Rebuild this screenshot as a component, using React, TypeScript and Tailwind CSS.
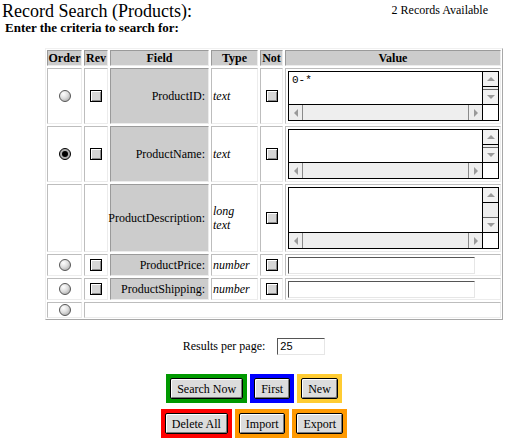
import React from "react";

const cellBase =
  "border border-t-[#bdbdbd] border-l-[#bdbdbd] border-r-[#ececec] border-b-[#ececec]";
const headBase =
  "flex items-center justify-center border border-t-[#9a9a9a] border-l-[#9a9a9a] border-r-[#ececec] border-b-[#ececec] bg-[#cccccc] text-[12px] font-bold leading-none overflow-hidden whitespace-nowrap";

function Radio({ checked = false }: { checked?: boolean }) {
  if (checked) {
    return (
      <span className="flex h-[12px] w-[12px] items-center justify-center rounded-full border border-black bg-[#b0b0b0]">
        <span className="block h-[6px] w-[6px] rounded-full bg-black" />
      </span>
    );
  }
  return (
    <span className="block h-[12px] w-[12px] rounded-full border border-[#555555] bg-[radial-gradient(circle_at_35%_30%,#ffffff_0%,#dedede_45%,#9a9a9a_100%)]" />
  );
}

function Check() {
  return (
    <span className="block h-[12px] w-[12px] border border-black bg-[#d6d6d6] shadow-[inset_1px_1px_0_#ffffff,inset_-1px_-1px_0_#8a8a8a]" />
  );
}

function Arrow({ dir }: { dir: "up" | "down" | "left" | "right" }) {
  const pts = {
    up: "0,4 4,0 8,4",
    down: "0,0 8,0 4,4",
    left: "4,0 4,8 0,4",
    right: "0,0 0,8 4,4",
  }[dir];
  const vertical = dir === "up" || dir === "down";
  return (
    <svg width={vertical ? 8 : 4} height={vertical ? 4 : 8} viewBox={vertical ? "0 0 8 4" : "0 0 4 8"}>
      <polygon points={pts} fill="#9a9a9a" />
    </svg>
  );
}

function TextBox({ className, text = "" }: { className: string; text?: string }) {
  return (
    <div className={`grid w-[211px] grid-cols-[1fr_16px] grid-rows-[1fr_16px] border border-black bg-white ${className}`}>
      <div className="px-[3px] pt-[2px] font-['Liberation_Mono',monospace] text-[11px] leading-[12px]">{text}</div>
      <div className="flex flex-col border-l border-black bg-[#eeeeee]">
        <div className="flex h-[15px] items-center justify-center border-b border-black bg-[#f2f2f2]">
          <Arrow dir="up" />
        </div>
        <div className="flex-1" />
        <div className="flex h-[15px] items-center justify-center border-t border-[#666666] bg-[#f2f2f2]">
          <Arrow dir="down" />
        </div>
      </div>
      <div className="flex border-t border-black bg-[#eeeeee]">
        <div className="flex w-[14px] items-center justify-center border-r border-[#8a8a8a]">
          <Arrow dir="left" />
        </div>
        <div className="flex-1" />
        <div className="flex w-[14px] items-center justify-center border-l border-[#8a8a8a]">
          <Arrow dir="right" />
        </div>
      </div>
      <div className="border-l border-t border-black bg-white" />
    </div>
  );
}

function LineInput() {
  return (
    <div className="h-[17px] w-[187px] border border-t-[#555555] border-l-[#555555] border-r-[#e6e6e6] border-b-[#e6e6e6] bg-white" />
  );
}

function Btn({ label }: { label: string }) {
  return (
    <button className="flex h-[21px] items-center rounded-[2px] border border-black bg-[#dcdcdc] px-[6px] text-[12px] leading-none text-black shadow-[inset_1px_1px_0_#ffffff,inset_-1px_-1px_0_#7a7a7a]">
      {label}
    </button>
  );
}

const fields = [
  { name: "ProductID:", type: "text", kind: "area", text: "0-*", radio: "off" },
  { name: "ProductName:", type: "text", kind: "area", text: "", radio: "on" },
  { name: "ProductDescription:", type: "long text", kind: "tall", text: "", radio: "none" },
  { name: "ProductPrice:", type: "number", kind: "line", text: "", radio: "off" },
  { name: "ProductShipping:", type: "number", kind: "line", text: "", radio: "off" },
];

export default function App() {
  return (
    <div className="h-[443px] w-[508px] overflow-hidden bg-white font-['Liberation_Serif','Times_New_Roman',serif] text-black">
      {/* title line */}
      <div className="flex h-[21px] items-start justify-between">
        <h1 className="pl-[2px] text-[18px] leading-[22px]">Record Search (Products):</h1>
        <span className="pr-[20px] pt-[3px] text-[12px] leading-[14px]">2 Records Available</span>
      </div>
      <div className="h-[14px] pl-[5px] text-[13px] font-bold leading-[14px]">Enter the criteria to search for:</div>

      {/* criteria grid */}
      <div className="ml-[45px] mt-[13px] grid w-[458px] grid-cols-[35px_24px_99px_47px_23px_216px] grid-rows-[16px_56px_56px_68px_22px_22px_16px] gap-[2px] border border-t-[#f0f0f0] border-l-[#f0f0f0] border-r-[#a8a8a8] border-b-[#a8a8a8] p-[1px]">
        <div className={headBase}>Order</div>
        <div className={headBase}>Rev</div>
        <div className={headBase}>Field</div>
        <div className={headBase}>Type</div>
        <div className={headBase}>Not</div>
        <div className={headBase}>Value</div>

        {fields.map((f) => (
          <React.Fragment key={f.name}>
            <div className={`${cellBase} flex items-center justify-center`}>
              {f.radio !== "none" && <Radio checked={f.radio === "on"} />}
            </div>
            <div className={`${cellBase} flex items-center justify-center`}>
              {f.radio !== "none" && <Check />}
            </div>
            <div className="flex items-center justify-end whitespace-nowrap border border-t-[#9a9a9a] border-l-[#9a9a9a] border-r-[#ececec] border-b-[#ececec] bg-[#cccccc] pr-[3px] text-[12px]">
              {f.name}
            </div>
            <div className={`${cellBase} flex items-center pl-[1px] text-[12px] italic leading-[14px]`}>
              {f.type === "long text" ? (
                <span>
                  long
                  <br />
                  text
                </span>
              ) : (
                f.type
              )}
            </div>
            <div className={`${cellBase} flex items-center justify-center`}>
              <Check />
            </div>
            <div className={`${cellBase} flex items-center pl-[2px]`}>
              {f.kind === "area" && <TextBox className="h-[50px]" text={f.text} />}
              {f.kind === "tall" && <TextBox className="h-[62px]" />}
              {f.kind === "line" && <LineInput />}
            </div>
          </React.Fragment>
        ))}

        <div className={`${cellBase} flex items-center justify-center`}>
          <Radio />
        </div>
        <div className={`${cellBase} col-span-5`} />
      </div>

      {/* paging */}
      <div className="mt-[17px] flex items-center justify-center gap-[12px] text-[12px]">
        <span>Results per page:</span>
        <div className="flex h-[17px] w-[48px] items-center border border-t-[#555555] border-l-[#555555] border-r-[#e6e6e6] border-b-[#e6e6e6] pl-[2px] font-['Liberation_Sans',Arial,sans-serif] text-[11px]">
          25
        </div>
      </div>

      {/* actions */}
      <div className="mt-[19px] flex flex-col items-center gap-[6px]">
        <div className="flex gap-[3px]">
          <div className="bg-[#009900] p-[4px]"><Btn label="Search Now" /></div>
          <div className="bg-[#0000ff] p-[4px]"><Btn label="First" /></div>
          <div className="bg-[#ffcc33] p-[4px]"><Btn label="New" /></div>
        </div>
        <div className="flex gap-[3px]">
          <div className="bg-[#ff0000] p-[4px]"><Btn label="Delete All" /></div>
          <div className="bg-[#ff9900] p-[4px]"><Btn label="Import" /></div>
          <div className="bg-[#ff9900] p-[4px]"><Btn label="Export" /></div>
        </div>
      </div>
    </div>
  );
}
